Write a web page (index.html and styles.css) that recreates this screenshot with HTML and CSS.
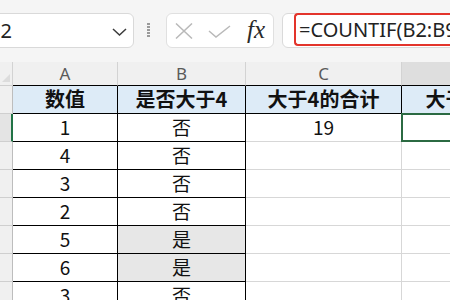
FILE: index.html
```html
<!DOCTYPE html>
<html>
<head>
  <title>COUNTIF - 工作表</title>
  <link rel="stylesheet" href="styles.css">
</head>
<body>
  <!-- Formula bar -->
  <div class="toolbar">
    <div class="name-box">
      <span class="name-text">D2</span>
      <svg class="chevron" width="15" height="8" viewBox="0 0 15 8"><path d="M1 1 L7.5 7 L14 1" fill="none" stroke="#3c3c3c" stroke-width="1.5"/></svg>
    </div>
    <div class="grip"></div>
    <div class="fx-buttons">
      <svg class="icon-cancel" width="18" height="16" viewBox="0 0 18 16"><path d="M1 0.5 L17 15.5 M17 0.5 L1 15.5" stroke="#b9b9b9" stroke-width="1.5" fill="none"/></svg>
      <svg class="icon-enter" width="23" height="13" viewBox="0 0 23 13"><path d="M1 6 L8 12 L22 1" stroke="#b9b9b9" stroke-width="1.5" fill="none"/></svg>
      <span class="fx">fx</span>
    </div>
    <div class="formula-box">
      <div class="formula-mark">=COUNTIF(B2:B9,"是")</div>
    </div>
  </div>

  <!-- Sheet grid -->
  <div class="sheet">
    <!-- column letters -->
    <div class="corner"></div>
    <div class="col-head">A</div>
    <div class="col-head">B</div>
    <div class="col-head">C</div>
    <div class="col-head active">D</div>

    <!-- header row -->
    <div class="row-head"></div>
    <div class="cell th">数值</div>
    <div class="cell th">是否大于4</div>
    <div class="cell th">大于4的合计</div>
    <div class="cell th">大于4的个数</div>

    <div class="row-head active"></div>
    <div class="cell boxed">1</div>
    <div class="cell boxed">否</div>
    <div class="cell">19</div>
    <div class="cell selected"></div>

    <div class="row-head"></div>
    <div class="cell boxed">4</div>
    <div class="cell boxed">否</div>
    <div class="cell"></div>
    <div class="cell"></div>

    <div class="row-head"></div>
    <div class="cell boxed">3</div>
    <div class="cell boxed">否</div>
    <div class="cell"></div>
    <div class="cell"></div>

    <div class="row-head"></div>
    <div class="cell boxed">2</div>
    <div class="cell boxed">否</div>
    <div class="cell"></div>
    <div class="cell"></div>

    <div class="row-head"></div>
    <div class="cell boxed">5</div>
    <div class="cell boxed shade">是</div>
    <div class="cell"></div>
    <div class="cell"></div>

    <div class="row-head"></div>
    <div class="cell boxed">6</div>
    <div class="cell boxed shade">是</div>
    <div class="cell"></div>
    <div class="cell"></div>

    <div class="row-head"></div>
    <div class="cell boxed">3</div>
    <div class="cell boxed">否</div>
    <div class="cell"></div>
    <div class="cell"></div>
  </div>
</body>
</html>
```

FILE: styles.css
```css
body {
  margin: 0;
  padding: 0;
  width: 450px;
  height: 300px;
  overflow: hidden;
  background-color: #fff;
  font-family: "Noto Sans", "Noto Sans CJK SC", sans-serif;
}

/* Formula bar */
.toolbar {
  height: 62px;
  box-sizing: border-box;
  padding-top: 13px;
  background-color: #f5f5f5;
  display: flex;
  align-items: flex-start;
  white-space: nowrap;
}

.name-box {
  flex: none;
  width: 156px;
  height: 35px;
  margin-left: -22px;
  box-sizing: border-box;
  padding: 0 6px 0 7px;
  background-color: #fff;
  border: 1px solid #d9d9d9;
  border-radius: 6px;
  display: flex;
  align-items: center;
  justify-content: space-between;
}

.name-text {
  font-size: 20px;
  color: #222;
}

.chevron {
  margin-top: 2px;
}

.grip {
  flex: none;
  width: 3px;
  height: 15px;
  margin: 10px 0 0 13px;
  background-image: repeating-linear-gradient(#9a9a9a 0 2px, transparent 2px 3px);
}

.fx-buttons {
  flex: none;
  width: 108px;
  height: 35px;
  margin-left: 16px;
  box-sizing: border-box;
  padding-left: 8px;
  background-color: #fff;
  border: 1px solid #e0e0e0;
  border-radius: 6px;
  display: flex;
  align-items: center;
}

.icon-cancel {
  margin-top: 1px;
}

.icon-enter {
  margin-left: 15px;
  margin-top: 2px;
}

.fx {
  margin-left: 16px;
  margin-bottom: 3px;
  font-family: "Liberation Serif", serif;
  font-style: italic;
  font-size: 25px;
  color: #2a2a2a;
  line-height: 1;
}

.formula-box {
  flex: 1;
  min-width: 200px;
  height: 35px;
  margin-left: 8px;
  box-sizing: border-box;
  padding-left: 11px;
  background-color: #fff;
  border: 1px solid #dadada;
  border-radius: 6px 0 0 6px;
}

.formula-mark {
  height: 33px;
  box-sizing: border-box;
  margin-top: -1px;
  padding-left: 3px;
  border: 2px solid #e3342b;
  border-right: none;
  border-radius: 4px 0 0 4px;
  font-size: 20px;
  line-height: 29px;
  color: #222;
}

/* Sheet grid */
.sheet {
  display: grid;
  grid-template-columns: 13px 105px 128px 156px 160px;
  grid-template-rows: 24px repeat(8, 28px);
}

.corner,
.col-head,
.row-head {
  background-color: #f0f0f0;
  box-sizing: border-box;
  border-right: 1px solid #d3d3d3;
  border-bottom: 1px solid #cfcfcf;
}

.corner {
  position: relative;
}

.corner::after {
  content: "";
  position: absolute;
  right: 2px;
  bottom: 3px;
  border-left: 8px solid transparent;
  border-bottom: 8px solid #dcdcdc;
}

.col-head {
  font-size: 17px;
  color: #5a5a5a;
  text-align: center;
  line-height: 23px;
  border-bottom-color: #000;
}

.col-head.active {
  background-color: #dedede;
}

.row-head {
  border-right-color: #bdbdbd;
}

.row-head.active {
  background-color: #e4e4e4;
  border-right: 2px solid #217346;
}

.cell {
  box-sizing: border-box;
  border-right: 1px solid #d7d7d7;
  border-bottom: 1px solid #d7d7d7;
  font-family: "Noto Sans CJK SC", sans-serif;
  font-size: 19px;
  line-height: 26px;
  text-align: center;
  color: #111;
  white-space: nowrap;
  overflow: hidden;
}

.cell.th {
  background-color: #ddebf7;
  font-weight: bold;
  font-size: 20px;
  border-right-color: #000;
  border-bottom-color: #000;
}

.cell.boxed {
  border-right-color: #000;
  border-bottom-color: #000;
}

.cell.shade {
  background-color: #e7e7e7;
}

/* selection frame over D2 */
.cell.selected {
  position: relative;
  overflow: visible;
}

.cell.selected::after {
  content: "";
  position: absolute;
  left: -1px;
  top: -1px;
  right: -1px;
  bottom: -1px;
  border: 2px solid #2b6a42;
}
```
